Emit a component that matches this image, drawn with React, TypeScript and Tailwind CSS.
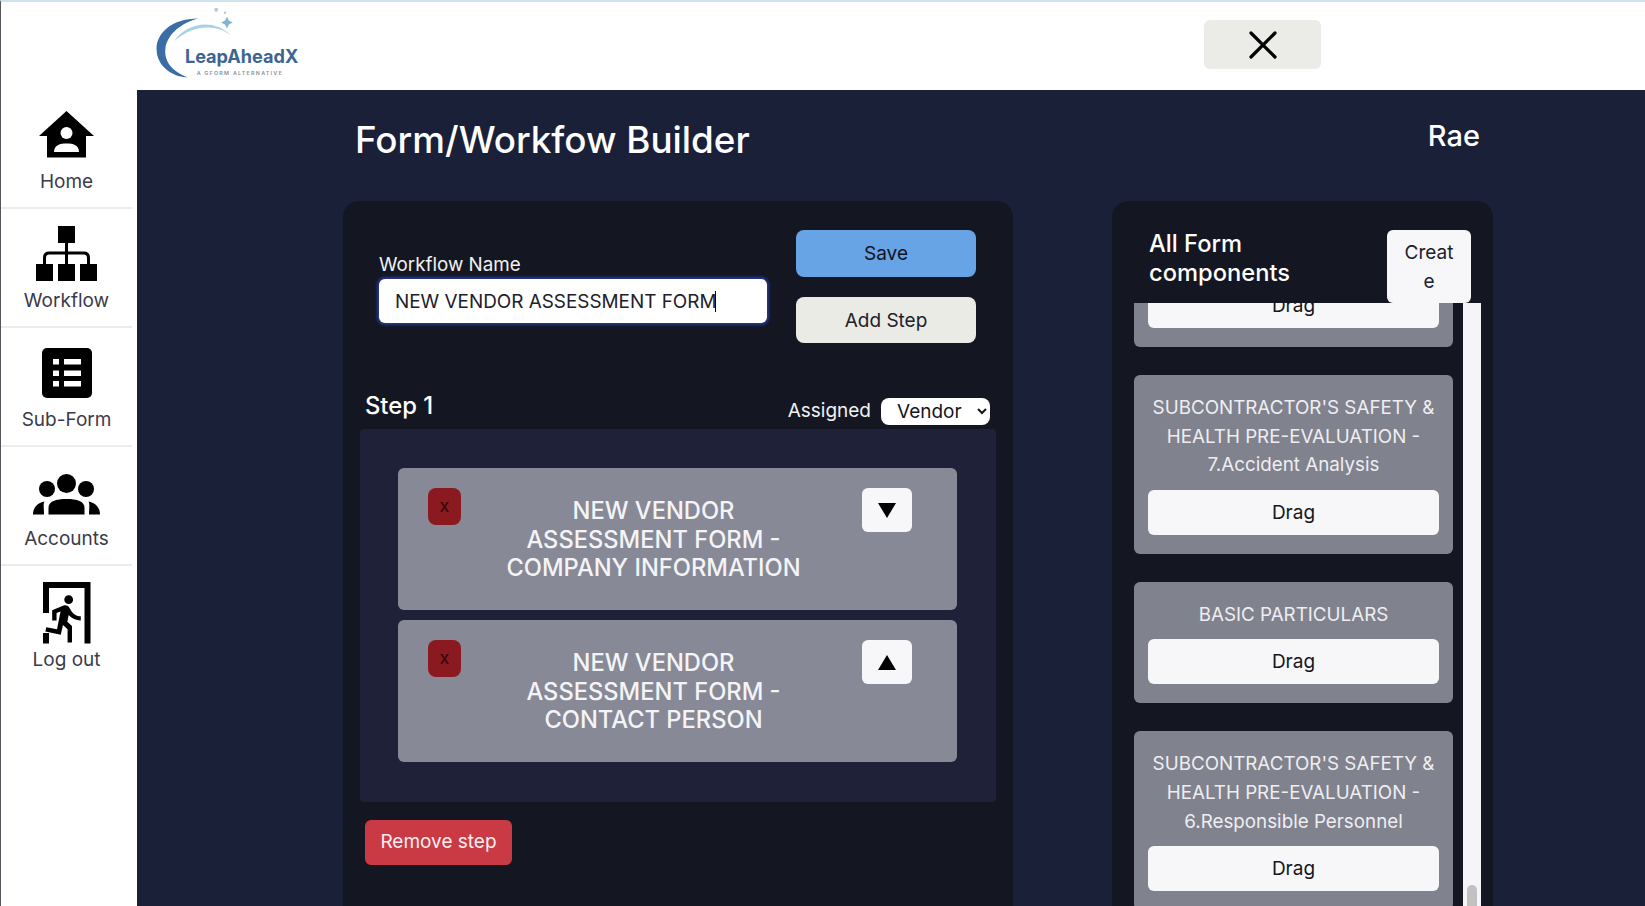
import React from "react";

const font = { fontFamily: "Inter, 'Liberation Sans', sans-serif" };

function Logo() {
  return (
    <svg width="170" height="88" viewBox="0 0 170 90" className="shrink-0">
      <path d="M58 17C29 17 15 33 15 48C15 66 32 77 47 77C33 72 22.500 62 24 48C25.500 33 41 21 58 17Z" fill="#3a6ca6" />
      <path d="M33 40C44 23 72 15 91 34C76 22 52 23 33 40Z" fill="#a8d2e6" />
      <path d="M87 15L89 19L93 21L89 23L87 27L85 23L81 21L85 19Z" fill="#7fb6d6" />
      <circle cx="76" cy="8" r="2" fill="#b4c8d8" />
      <circle cx="85" cy="11" r="1.200" fill="#b4c8d8" />
      <text x="44" y="62" fontSize="18.500" fontWeight="700" fill="#3d6593" fontFamily="Inter, sans-serif" textLength="116">LeapAheadX</text>
      <text x="56" y="74.500" fontSize="5.500" fontWeight="600" fill="#8b8f96" fontFamily="Inter, sans-serif" textLength="87">A GFORM ALTERNATIVE</text>
    </svg>
  );
}

function HomeIcon() {
  return (
    <svg width="56" height="47" viewBox="0 0 56 47" className="-mt-px">
      <path d="M27.500 0L55 25H47V46.500H8V25H0Z" fill="#000" />
      <circle cx="27.500" cy="22" r="6" fill="#fff" />
      <path d="M15 41C15 34 21 32.500 27.500 32.500C34 32.500 40 34 40 41Z" fill="#fff" />
    </svg>
  );
}

function WorkflowIcon() {
  return (
    <svg width="62" height="55" viewBox="0 0 62 55">
      <rect x="22" y="0" width="17" height="17" fill="#000" />
      <rect x="0" y="38" width="17" height="17" fill="#000" />
      <rect x="22" y="38" width="17" height="17" fill="#000" />
      <rect x="44" y="38" width="17" height="17" fill="#000" />
      <path d="M30.500 16V38M8.500 38V32C8.500 28.500 10 27 13 27H48C51 27 52.500 28.500 52.500 32V38" stroke="#000" strokeWidth="3" fill="none" />
    </svg>
  );
}

function SubFormIcon() {
  return (
    <svg width="50" height="50" viewBox="0 0 50 50">
      <rect width="50" height="50" rx="5" fill="#000" />
      <rect x="11" y="11" width="6" height="5.500" fill="#fff" />
      <rect x="22" y="11" width="17" height="5.500" fill="#fff" />
      <rect x="11" y="22.500" width="6" height="5.500" fill="#fff" />
      <rect x="22" y="22.500" width="17" height="5.500" fill="#fff" />
      <rect x="11" y="33" width="6" height="5.500" fill="#fff" />
      <rect x="22" y="33" width="17" height="5.500" fill="#fff" />
    </svg>
  );
}

function AccountsIcon() {
  return (
    <svg width="67" height="41" viewBox="0 0 67 41" className="mt-[6px]">
      <circle cx="14" cy="15" r="8" fill="#000" />
      <circle cx="53" cy="15" r="8" fill="#000" />
      <circle cx="33.500" cy="9.500" r="11.500" fill="#fff" />
      <circle cx="33.500" cy="9.500" r="9.500" fill="#000" />
      <path d="M15.500 40.500V34C15.500 27 23 25 33.500 25C44 25 51.500 27 51.500 34V40.500Z" fill="#000" />
      <path d="M0 40.500C0 34 4 29 11.500 27.500C10 30 11 34 11 40.500Z" fill="#000" />
      <path d="M67 40.500C67 34 63 29 55.500 27.500C57 30 56 34 56 40.500Z" fill="#000" />
    </svg>
  );
}

function LogoutIcon() {
  return (
    <svg width="48" height="62" viewBox="0 0 48 62" className="mt-[2px]">
      <path d="M0 0H47.500V61.500H41.500V6H6V31H0Z" fill="#000" />
      <rect x="0" y="51" width="6" height="10.500" fill="#000" />
      <g transform="translate(-4 10) scale(2.2)">
        <path d="M13.490 5.480c1.100 0 2-.9 2-2s-.9-2-2-2-2 .9-2 2 .9 2 2 2zm-3.600 13.900l1-4.400 2.100 2v6h2v-7.500l-2.100-2 .6-3c1.300 1.500 3.300 2.500 5.500 2.500v-2c-1.900 0-3.500-1-4.300-2.400l-1-1.600c-.4-.6-1-1-1.700-1-.3 0-.5.1-.8.1l-5.200 2.200v4.700h2v-3.400l1.800-.7-1.600 8.100-4.900-1-.4 2 7 1.400z" fill="#000" />
      </g>
    </svg>
  );
}

const nav: { label: string; icon: React.ReactNode; last?: boolean }[] = [
  { label: "Home", icon: <HomeIcon /> },
  { label: "Workflow", icon: <WorkflowIcon /> },
  { label: "Sub-Form", icon: <SubFormIcon /> },
  { label: "Accounts", icon: <AccountsIcon /> },
  { label: "Log out", icon: <LogoutIcon />, last: true },
];

function NavItem({ label, icon, last }: { label: string; icon: React.ReactNode; last?: boolean }) {
  return (
    <div className={`flex h-[119px] flex-col items-center pb-[13px] pt-[9px] ${last ? "" : "border-b-2 border-[#ececef]"}`}>
      <div className="flex flex-1 items-center justify-center">{icon}</div>
      <div className="text-[19px] leading-6 text-[#3b3b4a]">{label}</div>
    </div>
  );
}

function StepCard({ lines, dir }: { lines: string[]; dir: "up" | "down" }) {
  return (
    <div className="flex h-[142px] rounded-md bg-[#878996] pl-[30px] pr-[45px] pt-5">
      <button className="flex h-[37px] w-[33px] items-center justify-center rounded-lg bg-[#8a1a20] pb-[3px] text-[18px] text-[#2a0508]">x</button>
      <div className="flex-1 pr-[16px] pt-[9px] text-center text-[23.700px] font-medium leading-[28.600px] text-[#f4f4f7]">
        {lines.map((l) => (
          <div key={l}>{l}</div>
        ))}
      </div>
      <button className="flex h-[44px] w-[50px] items-center justify-center rounded-md bg-[#f7f7fa]">
        <svg width="18" height="15" viewBox="0 0 18 15">
          <path d={dir === "up" ? "M9 0L18 15H0Z" : "M9 15L18 0H0Z"} fill="#000" />
        </svg>
      </button>
    </div>
  );
}

function FormCard({ lines, className }: { lines?: string[]; className?: string }) {
  return (
    <div className={`rounded-md bg-[#80828d] px-[14px] py-[19px] ${className ?? ""}`}>
      {lines && (
        <div className="mb-[10px] text-center text-[18.800px] leading-[28.600px] text-[#eeeef2]">
          {lines.map((l) => (
            <div key={l}>{l}</div>
          ))}
        </div>
      )}
      <button className="h-[45px] w-full rounded-md bg-[#f7f7fa] pt-[1px] text-[19px] text-[#15151c]">Drag</button>
    </div>
  );
}

export default function App() {
  return (
    <div style={font} className="flex h-[906px] w-[1645px] flex-col overflow-hidden border-l border-t-2 border-l-[#55565c] border-t-[#cfe3ee] bg-white">
      <header className="flex h-[88px] shrink-0 items-center pl-[139px]">
        <Logo />
        <button className="mb-[3px] ml-[894px] flex h-[49px] w-[117px] items-center justify-center rounded-md bg-[#ebebe7]">
          <svg width="28" height="28" viewBox="0 0 28 28">
            <path d="M2 2L26 26M26 2L2 26" stroke="#000" strokeWidth="3.200" strokeLinecap="round" />
          </svg>
        </button>
      </header>
      <div className="flex min-h-0 flex-1">
        <nav className="w-[136px] shrink-0 pr-[5px]">
          {nav.map((n) => (
            <NavItem key={n.label} {...n} />
          ))}
        </nav>
        <main className="min-w-0 flex-1 bg-[#1b2039]">
          <div className="flex h-[111px] items-start justify-between pl-[218px] pr-[165px] pt-[24px]">
            <h1 className="text-[36.800px] font-medium leading-[52px] text-white">Form/Workfow Builder</h1>
            <div className="text-[29px] font-medium leading-[44px] text-white">Rae</div>
          </div>
          <div className="ml-[206px] flex gap-[99px]">
            <section className="h-[720px] w-[670px] rounded-2xl bg-[#141722]">
              <div className="flex gap-[29px] pl-9">
                <div className="w-[388px] pt-[51px]">
                  <label className="mb-[1px] block text-[18.800px] leading-[26px] text-[#f2f2f2]">Workflow Name</label>
                  <div className="relative">
                    <input
                      readOnly
                      value="NEW VENDOR ASSESSMENT FORM"
                      className="h-[44px] w-full rounded-md bg-white px-4 text-[18.900px] text-[#20202a] shadow-[0_0_3px_2px_#2a3890]"
                    />
                    <span className="absolute left-[336px] top-[12px] h-[21px] w-px bg-black" />
                  </div>
                </div>
                <div className="flex w-[180px] flex-col gap-[20px] pt-[29px]">
                  <button className="h-[47px] rounded-lg bg-[#67a4e6] pt-[2px] text-[19px] text-[#10131c]">Save</button>
                  <button className="h-[46px] rounded-lg bg-[#ebebe6] pt-[2px] text-[19px] text-[#20202a]">Add Step</button>
                </div>
              </div>
              <div className="mt-[45px] flex h-[41px] items-start justify-between pl-[22px] pr-[23px]">
                <div className="pt-[2px] text-[23.800px] font-medium leading-8 text-white">Step 1</div>
                <div className="flex items-center gap-[10px] pt-[9px]">
                  <span className="text-[19px] text-[#f2f2f2]">Assigned</span>
                  <select className="h-[27px] w-[109px] rounded-lg bg-white pl-3 text-[19px] text-[#15151c]" defaultValue="Vendor">
                    <option>Vendor</option>
                  </select>
                </div>
              </div>
              <div className="mx-[17px] flex flex-col gap-[10px] rounded bg-[#1e2138] pb-[40px] pl-[38px] pr-[39px] pt-[39px]">
                <StepCard dir="down" lines={["NEW VENDOR", "ASSESSMENT FORM -", "COMPANY INFORMATION"]} />
                <StepCard dir="up" lines={["NEW VENDOR", "ASSESSMENT FORM -", "CONTACT PERSON"]} />
              </div>
              <button className="ml-[22px] mt-[18px] h-[45px] w-[147px] rounded-md bg-[#c93a45] text-[19px] text-[#fbeef0]">Remove step</button>
            </section>
            <section className="h-[720px] w-[381px] overflow-hidden rounded-t-2xl bg-[#141722]">
              <div className="flex h-[102px] items-start justify-between pl-[37px] pr-[22px]">
                <div className="pt-[29px] text-[23.700px] font-medium leading-[28.600px] text-white">
                  All Form
                  <br />
                  components
                </div>
                <button className="mt-[29px] h-[73px] w-[84px] break-all rounded-md bg-[#f7f7fa] px-[14px] pt-[2px] text-[19px] leading-[28.600px] text-[#20202a]">Create</button>
              </div>
              <div className="flex h-[603px] gap-[10px] pl-[22px]">
                <div className="flex w-[319px] flex-col gap-[28px] overflow-hidden">
                  <FormCard className="-mt-[39px] shrink-0" />
                  <FormCard className="shrink-0" lines={["SUBCONTRACTOR'S SAFETY &", "HEALTH PRE-EVALUATION -", "7.Accident Analysis"]} />
                  <FormCard className="shrink-0" lines={["BASIC PARTICULARS"]} />
                  <FormCard className="shrink-0" lines={["SUBCONTRACTOR'S SAFETY &", "HEALTH PRE-EVALUATION -", "6.Responsible Personnel"]} />
                </div>
                <div className="flex h-full w-[18px] items-end justify-center bg-[#f5f5f7]">
                  <div className="h-[21px] w-[10px] rounded-t-md bg-[#c1c1c1]" />
                </div>
              </div>
            </section>
          </div>
        </main>
      </div>
    </div>
  );
}
